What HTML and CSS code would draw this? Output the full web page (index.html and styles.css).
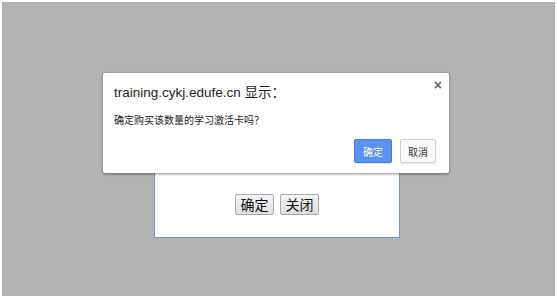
FILE: index.html
```html
<!DOCTYPE html>
<html lang="zh-CN">
<head>
    <meta charset="UTF-8">
    <title>确认</title>
    <link rel="stylesheet" href="styles.css">
</head>
<body>
    <div class="screen">
        <!-- page layer under the alert -->
        <div class="layer">
            <button class="layer-btn">确定</button>
            <button class="layer-btn">关闭</button>
        </div>

        <!-- browser alert -->
        <div class="alert">
            <span class="alert-close">×</span>
            <div class="alert-title">training.cykj.edufe.cn 显示：</div>
            <div class="alert-msg">确定购买该数量的学习激活卡吗？</div>
            <div class="alert-actions">
                <button class="btn btn-primary">确定</button>
                <button class="btn">取消</button>
            </div>
        </div>
    </div>
</body>
</html>
```

FILE: styles.css
```css
* {
    margin: 0;
    padding: 0;
    box-sizing: border-box;
}

body {
    background-color: #ffffff;
    font-family: "Liberation Sans", "Noto Sans CJK SC", sans-serif;
    color: #222;
}

.screen {
    position: relative;
    margin: 2px 2px 0 2px;
    height: 294px;
    background-color: #b2b2b2;
    padding-top: 108px;
}

/* Layer behind the alert */
.layer {
    margin-left: 152px;
    width: 246px;
    height: 128px;
    background-color: #fff;
    border: 1px solid #6f93c4;
    display: flex;
    justify-content: center;
    align-items: flex-end;
    gap: 6px;
    padding-bottom: 22px;
}

.layer-btn {
    width: 39px;
    height: 21px;
    font-family: "Noto Sans CJK SC", sans-serif;
    font-size: 14px;
    line-height: 19px;
    color: #111;
    background: linear-gradient(#f6f6f6, #dedede);
    border: 1px solid #a9a9a9;
    border-radius: 2px;
}

/* Alert dialog */
.alert {
    position: absolute;
    left: 101px;
    top: 71px;
    width: 346px;
    height: 100px;
    background-color: #fff;
    border-radius: 2px;
    box-shadow: 0 1px 3px rgba(0, 0, 0, 0.45);
    padding: 12px 13px 0 11px;
}

.alert-close {
    position: absolute;
    top: 4px;
    right: 7px;
    font-size: 14px;
    font-weight: bold;
    color: #666;
}

.alert-title {
    font-size: 13.5px;
    line-height: 16px;
    color: #222;
}

.alert-msg {
    margin-top: 13px;
    font-family: "Noto Sans CJK SC", sans-serif;
    font-size: 10px;
    line-height: 12px;
    color: #222;
}

.alert-actions {
    display: flex;
    justify-content: flex-end;
    gap: 8px;
    margin-top: 13px;
}

.btn {
    width: 36px;
    height: 24px;
    font-family: "Noto Sans CJK SC", sans-serif;
    font-size: 10px;
    color: #333;
    background-color: #fafafa;
    border: 1px solid #d0d0d0;
    border-radius: 2px;
    box-shadow: 0 1px 1px rgba(0, 0, 0, 0.1);
}

.btn-primary {
    width: 38px;
    color: #fff;
    background-color: #5a92f0;
    border-color: #3f7be0;
}
```
